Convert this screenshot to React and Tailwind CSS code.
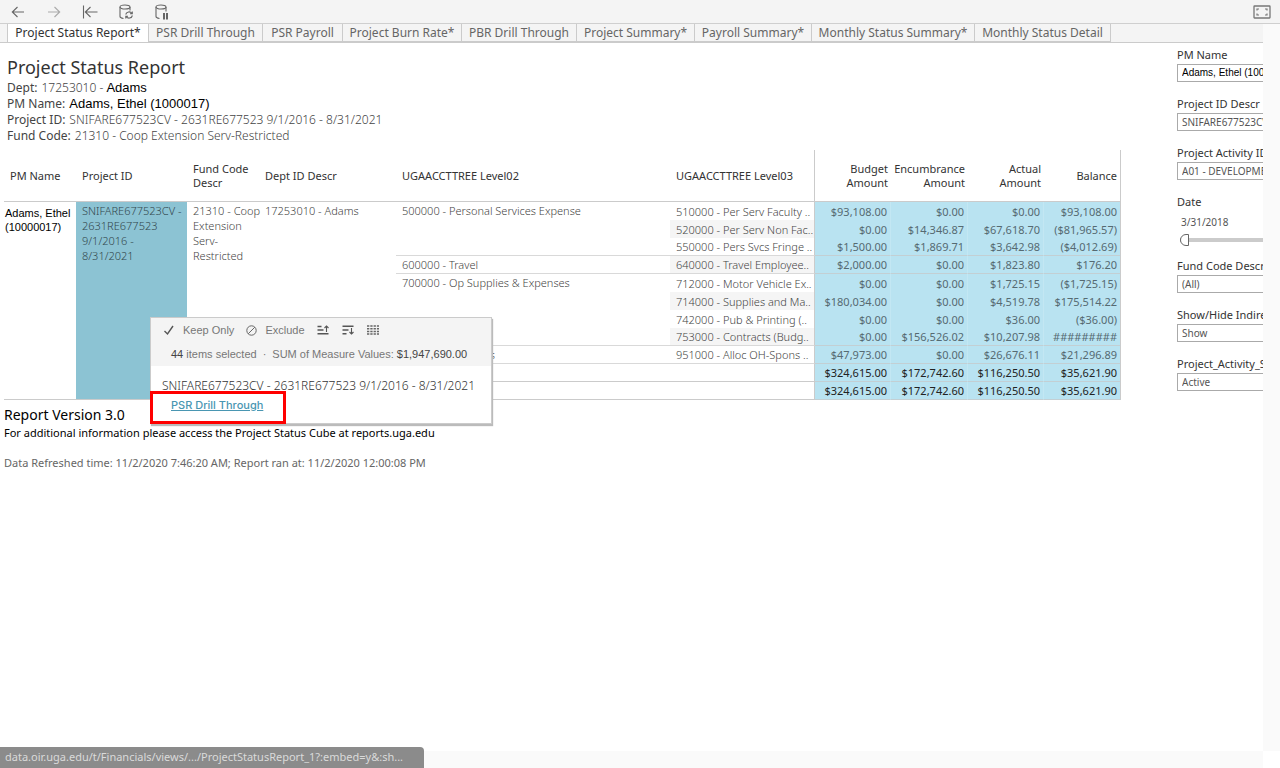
const TABS = [
  ["Project Status Report*", "w-[142px]"],
  ["PSR Drill Through", "w-[114px]"],
  ["PSR Payroll", "w-[80px]"],
  ["Project Burn Rate*", "w-[119px]"],
  ["PBR Drill Through", "w-[115px]"],
  ["Project Summary*", "w-[118px]"],
  ["Payroll Summary*", "w-[117px]"],
  ["Monthly Status Summary*", "w-[163px]"],
  ["Monthly Status Detail", "w-[136px]"],
];

const ROWS = [
  { l2: "500000 - Personal Services Expense", span: 3, l3: "510000 - Per Serv Faculty ..", v: ["$93,108.00", "$0.00", "$0.00", "$93,108.00"] },
  { l3: "520000 - Per Serv Non Fac..", v: ["$0.00", "$14,346.87", "$67,618.70", "($81,965.57)"] },
  { l3: "550000 - Pers Svcs Fringe ..", v: ["$1,500.00", "$1,869.71", "$3,642.98", "($4,012.69)"], end: true },
  { l2: "600000 - Travel", span: 1, l3: "640000 - Travel Employee..", v: ["$2,000.00", "$0.00", "$1,823.80", "$176.20"], end: true },
  { l2: "700000 - Op Supplies & Expenses", span: 4, l3: "712000 - Motor Vehicle Ex..", v: ["$0.00", "$0.00", "$1,725.15", "($1,725.15)"] },
  { l3: "714000 - Supplies and Ma..", v: ["$180,034.00", "$0.00", "$4,519.78", "$175,514.22"] },
  { l3: "742000 - Pub & Printing (..", v: ["$0.00", "$0.00", "$36.00", "($36.00)"] },
  { l3: "753000 - Contracts (Budg..", v: ["$0.00", "$156,526.02", "$10,207.98", "#########"], end: true },
  { l2: "900000 - Transfers", span: 1, l3: "951000 - Alloc OH-Spons ..", v: ["$47,973.00", "$0.00", "$26,676.11", "$21,296.89"], end: true },
];

const TOTAL = ["$324,615.00", "$172,742.60", "$116,250.50", "$35,621.90"];

function Toolbar() {
  const btn = "flex h-6 w-9 items-center justify-center";
  return (
    <header className="flex h-6 shrink-0 items-center justify-between border-b border-[#cfcfcf] bg-[#f4f4f4] pr-[9px]">
      <div className="flex">
        <button aria-label="Undo" className={btn}>
          <svg width="18" height="16" viewBox="0 0 18 16" fill="none" stroke="#666" strokeWidth="1.1"><path d="M15 8H3.5M8.5 3 3.3 8l5.2 5" /></svg>
        </button>
        <button aria-label="Redo" className={btn}>
          <svg width="18" height="16" viewBox="0 0 18 16" fill="none" stroke="#aaa" strokeWidth="1.1"><path d="M3 8h11.5M9.5 3l5.200 5-5.200 5" /></svg>
        </button>
        <button aria-label="Revert" className={btn}>
          <svg width="18" height="16" viewBox="0 0 18 16" fill="none" stroke="#666" strokeWidth="1.1"><path d="M2.5 1.5v13M16.5 8H4.5M9.5 3 4.3 8l5.200 5" /></svg>
        </button>
        <button aria-label="Refresh" className={btn}>
          <svg width="18" height="16" viewBox="0 0 18 16" fill="none" stroke="#666" strokeWidth="1.1"><ellipse cx="8" cy="3" rx="5" ry="2" /><path d="M3 3v9.500c0 1 1.500 1.700 3.500 2M13 3v3.500" /><path d="M8.700 10.500a3.400 3.400 0 0 1 6.200-1M15.300 7.500v2.300H13M15.400 11.500a3.400 3.400 0 0 1-6.200 1M8.800 14.500v-2.300H11" /></svg>
        </button>
        <button aria-label="Pause" className={btn}>
          <svg width="18" height="16" viewBox="0 0 18 16" fill="none" stroke="#666" strokeWidth="1.1"><ellipse cx="8" cy="3" rx="5" ry="2" /><path d="M3 3v9.500c0 1 1.500 1.700 3.500 2M13 3v4.500" /><path d="M11 9v6.500M14 9v6.500" strokeWidth="2" /></svg>
        </button>
      </div>
      <button aria-label="Full screen">
        <svg width="18" height="14" viewBox="0 0 18 14" fill="none" stroke="#777"><rect x="1" y="1" width="16" height="12" rx=".5" strokeWidth="1.3" /><path d="M4 5.500V4h2M12 4h2v1.500M4 8.500V10h2M12 10h2V8.500" strokeWidth="1.2" /></svg>
      </button>
    </header>
  );
}

function Tabs() {
  return (
    <nav className="flex h-[19px] shrink-0 border-b border-[#cbcbcb] bg-[#f4f4f4] pl-[7px] text-[12px]">
      {TABS.map(([t, w], i) => (
        <button
          key={t}
          className={`flex items-center justify-center whitespace-nowrap border-[#cbcbcb] ${w} ${
            i === 0 ? "border-x bg-white text-[#333]" : "border-r border-b text-[#666]"
          }`}
        >
          {t}
        </button>
      ))}
    </nav>
  );
}

function Summary() {
  const row = "flex gap-1";
  return (
    <div className="pl-[3px] pt-[11px]">
      <h1 className="text-[18px] leading-[26px] text-[#333]">Project Status Report</h1>
      <dl className="text-[12px] leading-4 text-[#444]">
        <div className={row}><dt>Dept:</dt><dd><span className="font-light">17253010 - </span><span className="font-['Liberation_Sans',sans-serif] text-[13px] text-black">Adams</span></dd></div>
        <div className={row}><dt>PM Name:</dt><dd className="font-['Liberation_Sans',sans-serif] text-[13px] text-black">Adams, Ethel (1000017)</dd></div>
        <div className={row}><dt>Project ID:</dt><dd className="font-light">SNIFARE677523CV - 2631RE677523 9/1/2016 - 8/31/2021</dd></div>
        <div className={row}><dt>Fund Code:</dt><dd className="font-light">21310 - Coop Extension Serv-Restricted</dd></div>
      </dl>
    </div>
  );
}

function Amounts({ values, end, bold }) {
  return values.map((v, i) => (
    <td
      key={i}
      className={`h-[18px] border-r bg-[#b9e3f1] pr-[3px] text-right font-normal ${i === 3 ? "border-r-[#cbcbcb]" : "border-r-[#c3e7f3]"} ${end ? "border-b border-b-[#c3cfd3]" : ""} ${bold ? "text-[#222]" : "text-[#566a71]"}`}
    >
      {v}
    </td>
  ));
}

function ReportTable() {
  const th = "h-[52px] border-b border-[#cbcbcb] px-1.5 text-left font-normal";
  const num = "h-[52px] border-b border-[#cbcbcb] pr-[3px] text-right font-normal";
  const top = "border-b pl-1.5 pt-px align-top";
  return (
    <table className="w-full table-fixed border-separate border-spacing-0 text-[11px] text-[#444]">
      <colgroup>
        <col className="w-[72px]" />
        <col className="w-[111px]" />
        <col className="w-[72px]" />
        <col className="w-[137px]" />
        <col />
        <col className="w-[145px]" />
        <col className="w-[76px]" />
        <col className="w-[77px]" />
        <col className="w-[76px]" />
        <col className="w-[77px]" />
      </colgroup>
      <thead className="leading-[14px] text-[#333]">
        <tr>
          <th className={th}>PM Name</th>
          <th className={th}>Project ID</th>
          <th className={th}>Fund Code Descr</th>
          <th className={th}>Dept ID Descr</th>
          <th className={th}>UGAACCTTREE Level02</th>
          <th className={`${th} border-r`}>UGAACCTTREE Level03</th>
          <th className={num}>Budget Amount</th>
          <th className={num}>Encumbrance Amount</th>
          <th className={num}>Actual Amount</th>
          <th className={`${num} border-r`}>Balance</th>
        </tr>
      </thead>
      <tbody className="font-light leading-[15px]">
        {ROWS.map((r, i) => (
          <tr key={r.l3}>
            {i === 0 && (
              <>
                <td rowSpan={11} className="border-b border-[#cbcbcb] pl-px pt-1 align-top font-['Liberation_Sans',sans-serif] font-normal leading-[14px] text-black">Adams, Ethel (10000017)</td>
                <td rowSpan={11} className={`${top} border-[#cbcbcb] bg-[#8cc3d3] text-[#33474d]`}>SNIFARE677523CV - 2631RE677523 9/1/2016 - 8/31/2021</td>
                <td rowSpan={9} className={`${top} border-[#d9d9d9]`}><div className="w-[70px]">21310 - Coop Extension <br />Serv-<br />Restricted</div></td>
                <td rowSpan={9} className={`${top} border-[#d9d9d9]`}>17253010 - Adams</td>
              </>
            )}
            {r.l2 && <td rowSpan={r.span} className={`${top} border-[#d9d9d9]`}>{r.l2}</td>}
            <td className={`whitespace-nowrap border-r border-r-[#cbcbcb] pl-1.5 ${i % 2 ? "bg-[#f5f5f5]" : ""} ${r.end ? "border-b border-b-[#d9d9d9]" : ""}`}>{r.l3}</td>
            <Amounts values={r.v} end={r.end} />
          </tr>
        ))}
        {[0, 1].map((k) => (
          <tr key={k}>
            <td colSpan={4} className="border-r border-b border-[#cbcbcb]" />
            <Amounts values={TOTAL} end bold />
          </tr>
        ))}
      </tbody>
    </table>
  );
}

function Tooltip() {
  return (
    <div className="absolute left-[146px] top-[167px] w-[342px] border border-[#cbcbcb] bg-white font-['Liberation_Sans',sans-serif] text-[11px] shadow-[1px_2px_1px_#bbb]">
      <div className="h-12 bg-[#f4f4f4] text-[#777]">
        <div className="flex h-6 items-center gap-3 pl-3">
          <button className="flex items-center gap-2">
            <svg width="12" height="12" viewBox="0 0 12 12" fill="none" stroke="#555" strokeWidth="1.4"><path d="M1.500 7 4.500 10 10 2" /></svg>
            Keep Only
          </button>
          <button className="flex items-center gap-2">
            <svg width="11" height="11" viewBox="0 0 11 11" fill="none" stroke="#666"><circle cx="5.5" cy="5.5" r="4.7" /><path d="m2.200 8.800 6.600-6.600" /></svg>
            Exclude
          </button>
          <button aria-label="Sort ascending">
            <svg width="13" height="10" viewBox="0 0 12 10" fill="none" stroke="#555" strokeWidth="1.5"><path d="M0 1.500h4M0 5h6M0 8.700h11" /><path d="M9 7V1M7 3l2-2 2 2" strokeWidth="1.1" /></svg>
          </button>
          <button aria-label="Sort descending">
            <svg width="13" height="10" viewBox="0 0 12 10" fill="none" stroke="#555" strokeWidth="1.5"><path d="M0 1.200h11M0 5h6M0 8.700h4" /><path d="M9 3v6M7 7l2 2 2-2" strokeWidth="1.1" /></svg>
          </button>
          <button aria-label="View data">
            <svg width="12" height="10" viewBox="0 0 12 10" fill="none" stroke="#666" strokeWidth="1.5"><path d="M0 1h12M0 3.700h12M0 6.400h12M0 9.100h12" strokeDasharray="2.3 1" /></svg>
          </button>
        </div>
        <p className="flex h-6 items-center gap-1.5 whitespace-nowrap pl-5">
          <span><b className="font-normal text-[#444]">44</b> items selected</span><span>·</span><span>SUM of Measure Values: <b className="font-normal text-[#444]">$1,947,690.00</b></span>
        </p>
      </div>
      <div className="h-[57px] pt-3">
        <p className="whitespace-nowrap pl-[11px] font-['Noto_Sans',sans-serif] text-[12px] font-light leading-4 text-[#333]">SNIFARE677523CV - 2631RE677523 9/1/2016 - 8/31/2021</p>
        <p className="pl-5 pt-[3px] font-['Inter',sans-serif] font-medium leading-4"><a href="#drill" className="text-[#4996b2] underline">PSR Drill Through</a></p>
      </div>
      <div className="pointer-events-none absolute -left-px top-[73px] h-[33px] w-[136px] border-[3px] border-[#f00]" />
    </div>
  );
}

function Filter({ id, label, value, className = "text-[#555]" }) {
  return (
    <div className="mb-3.5">
      <label htmlFor={id} className="block h-[17px] whitespace-nowrap text-[11px] leading-4 text-[#333]">{label}</label>
      <select id={id} className={`block h-[18px] w-[140px] appearance-none border border-[#aaa] bg-white px-1 text-[10px] leading-4 ${className}`}>
        <option>{value}</option>
      </select>
    </div>
  );
}

function Filters() {
  return (
    <aside className="w-[86px] shrink-0 overflow-hidden pt-1">
      <Filter id="pm" label="PM Name" value="Adams, Ethel (1000017)" className="font-['Liberation_Sans',sans-serif] text-black" />
      <Filter id="project" label="Project ID Descr" value="SNIFARE677523CV - 2631RE677523" />
      <Filter id="activity" label="Project Activity ID" value="A01 - DEVELOPMENT" />
      <div className="mb-2.5 h-[54px]">
        <label htmlFor="date" className="block h-[17px] text-[11px] leading-4 text-[#333]">Date</label>
        <output htmlFor="date" className="block h-[22px] pl-1 text-[10px] leading-[22px] text-[#555]">3/31/2018</output>
        <input
          id="date"
          type="range"
          defaultValue="0"
          className="ml-[3px] block h-[13px] w-[140px] appearance-none bg-transparent [&::-webkit-slider-runnable-track]:h-1 [&::-webkit-slider-runnable-track]:bg-[#cbcbcb] [&::-webkit-slider-thumb]:-mt-1 [&::-webkit-slider-thumb]:h-3 [&::-webkit-slider-thumb]:w-[9px] [&::-webkit-slider-thumb]:appearance-none [&::-webkit-slider-thumb]:rounded-l-full [&::-webkit-slider-thumb]:border [&::-webkit-slider-thumb]:border-[#666] [&::-webkit-slider-thumb]:bg-white"
        />
      </div>
      <Filter id="fund" label="Fund Code Descr" value="(All)" />
      <Filter id="indirect" label="Show/Hide Indirect" value="Show" />
      <Filter id="status" label="Project_Activity_Status" value="Active" />
    </aside>
  );
}

export default function App() {
  return (
    <div className="relative flex h-screen flex-col overflow-hidden bg-white font-['Noto_Sans',sans-serif]">
      <Toolbar />
      <div className="flex min-h-0 flex-1">
        <div className="flex min-w-0 flex-1 flex-col">
          <Tabs />
          <div className="flex min-h-0 flex-1">
            <main className="min-w-0 flex-1 pl-1 pr-14">
              <Summary />
              <div className="relative mt-1.5">
                <ReportTable />
                <Tooltip />
              </div>
              <footer className="text-[11px] text-black">
                <p className="pt-[5px] text-[14px] leading-5">Report Version 3.0</p>
                <p className="leading-4">For additional information please access the Project Status Cube at reports.uga.edu</p>
                <p className="pt-3.5 leading-4 text-[#666]">Data Refreshed time: 11/2/2020 7:46:20 AM; Report ran at: 11/2/2020 12:00:08 PM</p>
              </footer>
            </main>
            <Filters />
          </div>
        </div>
        <div className="w-[17px] shrink-0 bg-[#fafafa]" />
      </div>
      <div className="mr-[17px] h-[17px] shrink-0 bg-[#fafafa]" />
      <div className="absolute bottom-0 left-0 flex h-[21px] w-[424px] items-center whitespace-nowrap rounded-tr-sm bg-[#8b8b8b] pl-[5px] text-[11px] text-[#dadada]">
        data.oir.uga.edu/t/Financials/views/.../ProjectStatusReport_1?:embed=y&amp;:sh...
      </div>
    </div>
  );
}
